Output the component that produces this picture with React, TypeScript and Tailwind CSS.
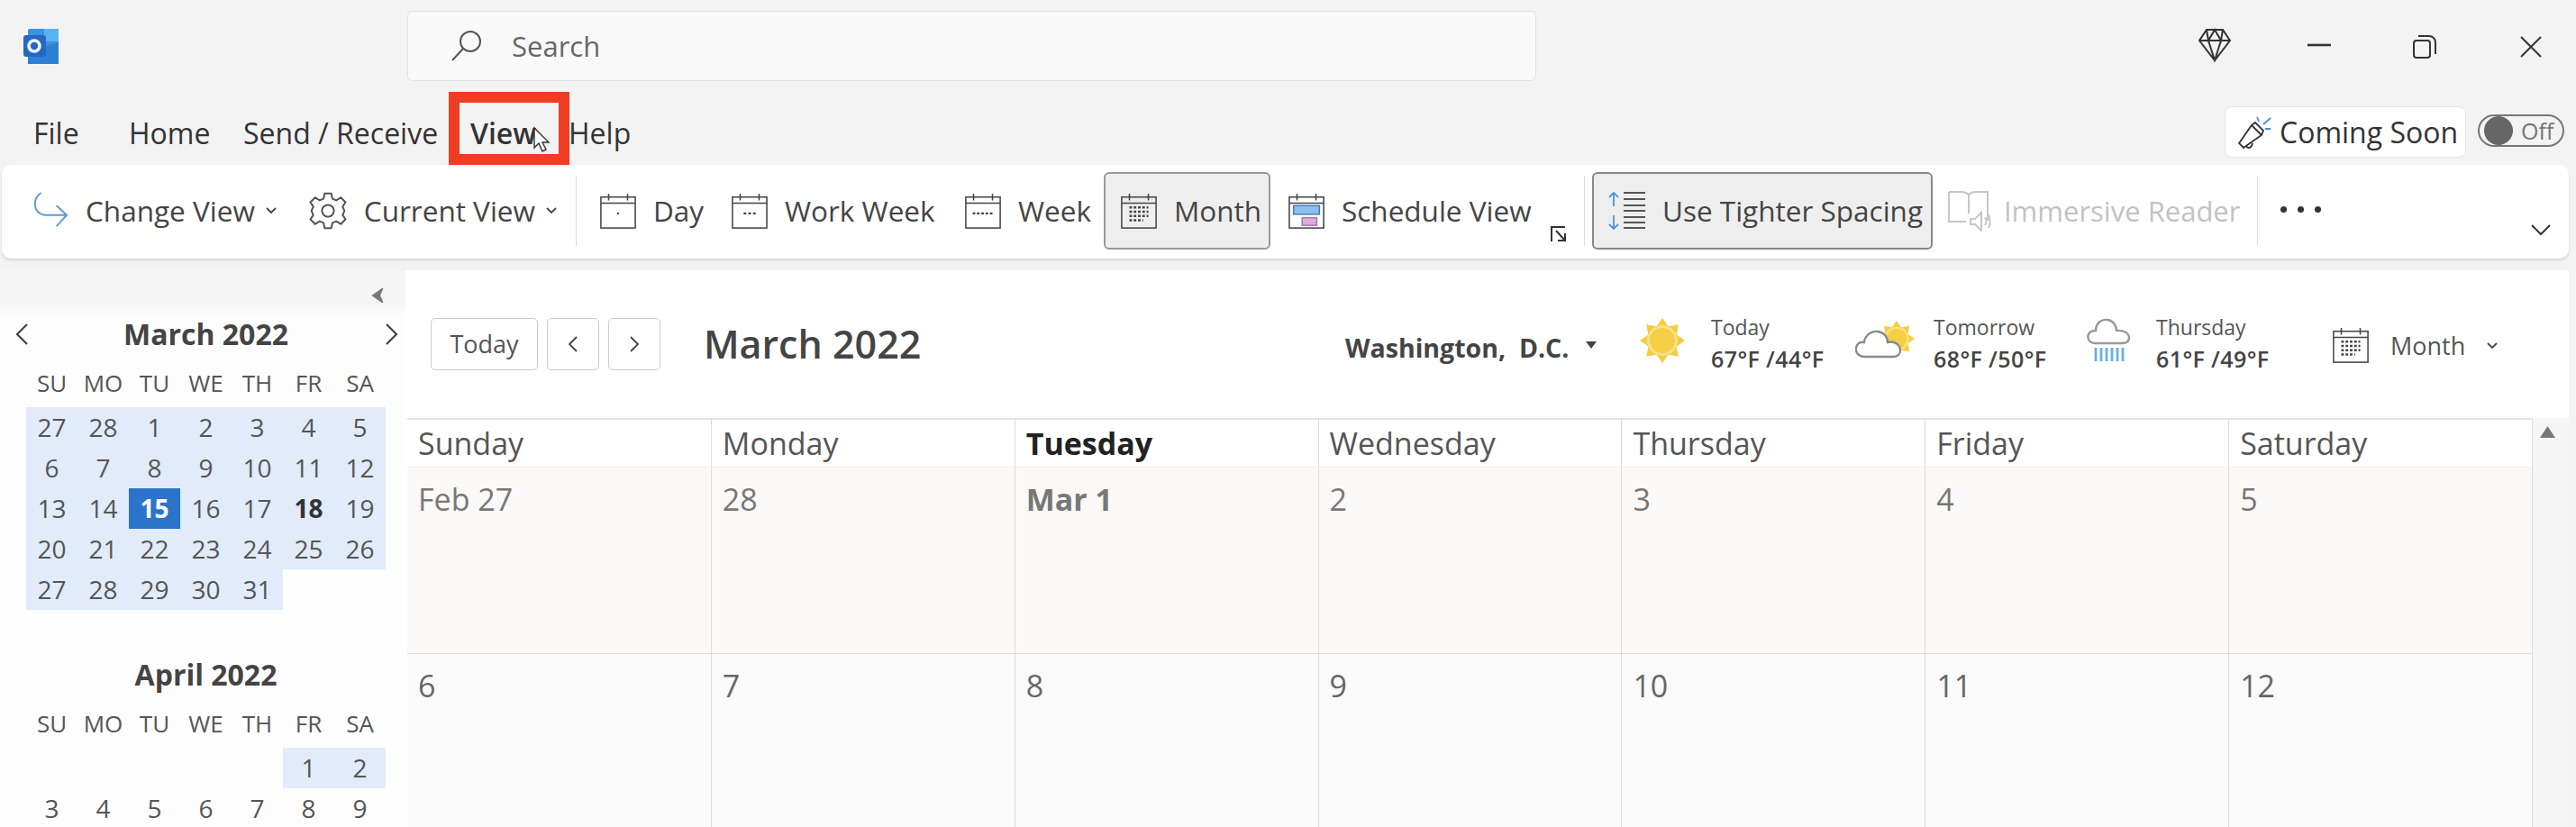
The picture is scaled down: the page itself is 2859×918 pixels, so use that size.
const font = 'font-["Open_Sans",_"Noto_Sans",sans-serif]'

const CalIcon = ({ kind }: { kind: 'day' | 'workweek' | 'week' | 'month' | 'schedule' }) => (
  <svg width="42" height="42" viewBox="0 0 44 44" className="shrink-0" fill="none" stroke="#444" strokeWidth="1.6">
    <rect x="2" y="6" width="40" height="36" />
    <path d="M2 13h40M11 2v8M33 2v8" />
    {kind === 'day' && <path d="M21 25h2" strokeWidth="2.5" />}
    {kind === 'workweek' && <path d="M15 25h14" strokeWidth="2.5" strokeDasharray="3 2.5" />}
    {kind === 'week' && <path d="M10 25h24" strokeWidth="2.5" strokeDasharray="3 2" />}
    {kind === 'month' && (
      <path d="M11 18h22M11 23h22M11 28h22M11 33h16" strokeWidth="2.6" strokeDasharray="3 2" />
    )}
    {kind === 'schedule' && (
      <>
        <rect x="7" y="16" width="30" height="10" fill="#8dc1ec" stroke="#3f7fc0" />
        <rect x="17" y="30" width="17" height="9" fill="#dcaee0" stroke="#a07aa8" />
      </>
    )}
  </svg>
)

const Chevron = ({ className = '' }: { className?: string }) => (
  <svg width="14" height="10" viewBox="0 0 14 10" fill="none" stroke="#444" strokeWidth="1.8" className={className}>
    <path d="M2 2l5 5 5-5" />
  </svg>
)

const RibbonCal = ({ kind, label, className }: { kind: 'day' | 'workweek' | 'week' | 'schedule'; label: string; className: string }) => (
  <div className={`flex items-center shrink-0 gap-[18px] ${className}`}>
    <CalIcon kind={kind} />
    <span>{label}</span>
  </div>
)

const rays = [0, 45, 90, 135, 180, 225, 270, 315]

// 8 pointed weather sun, centre at 25,25
const SunShape = ({ r = 25 }: { r?: number }) => (
  <g>
    {rays.map(a => (
      <path key={a} d={`M18 ${25 - r + 10}L25 ${25 - r}L32 ${25 - r + 10}z`} fill="#f4cd3c" transform={`rotate(${a} 25 25)`} />
    ))}
    <circle cx="25" cy="25" r={r - 8} fill="#f8e08a" />
    <circle cx="25" cy="25" r={r - 11} fill="#f4cf46" />
  </g>
)

const Weather = ({ label, temps, className }: { label: string; temps: string; className: string }) => (
  <div className={`flex flex-col ${className}`}>
    <span className="text-[23px] leading-[35px] text-[#555]">{label}</span>
    <span className="text-[25px] leading-[35px] font-semibold tracking-[0.4px] text-[#444] whitespace-nowrap">{temps}</span>
  </div>
)

const week = ['SU', 'MO', 'TU', 'WE', 'TH', 'FR', 'SA']

const MiniMonth = ({ title, days }: { title: string; days: (number | string)[] }) => (
  <div>
    <div className="text-center w-[399px] text-[32px] leading-[40px] font-bold text-[#444]">{title}</div>
    <div className="grid grid-cols-7 w-[399px] mt-[17px] text-center text-[26px] leading-[34px] text-[#555]">
      {week.map(d => (
        <div key={d}>{d}</div>
      ))}
    </div>
    <div className="grid grid-cols-7 w-[399px] mt-[10px] text-center text-[28px] text-[#555]">
      {days.map((d, i) => {
        const n = Number(d)
        const lit = title === 'March 2022' ? i < 33 : i === 5 || i === 6
        const today = title === 'March 2022' && n === 15
        const bold = title === 'March 2022' && n === 18
        return (
          <div
            key={i}
            className={`h-[45px] leading-[45px] ${
              today ? 'bg-[#2b74c9] text-white font-bold' : lit ? 'bg-[#e1ebf9]' : ''
            } ${bold ? 'font-bold text-[#333]' : ''}`}
          >
            {d}
          </div>
        )
      })}
    </div>
  </div>
)

const march = [27, 28, 1, 2, 3, 4, 5, 6, 7, 8, 9, 10, 11, 12, 13, 14, 15, 16, 17, 18, 19, 20, 21, 22, 23, 24, 25, 26, 27, 28, 29, 30, 31]
const april = ['', '', '', '', '', 1, 2, 3, 4, 5, 6, 7, 8, 9]

const headers = ['Sunday', 'Monday', 'Tuesday', 'Wednesday', 'Thursday', 'Friday', 'Saturday']
const row1 = ['Feb 27', '28', 'Mar 1', '2', '3', '4', '5']
const row2 = ['6', '7', '8', '9', '10', '11', '12']

export default function App() {
  return (
    <div className={`${font} w-[2859px] h-[918px] overflow-hidden bg-[#f3f3f3] text-[#333]`}>
      {/* title bar */}
      <div className="flex h-[102px] items-start">
        <svg width="40" height="40" viewBox="0 0 40 40" className="ml-[25px] mt-[32px] shrink-0">
          <rect x="6" y="0" width="34" height="39" rx="2" fill="#3b93e0" />
          <rect x="24" y="0" width="16" height="14" fill="#58b4ee" />
          <path d="M6 24l34-9v24H6z" fill="#2f80d4" />
          <rect x="1" y="7" width="25" height="24" rx="3" fill="#2468c4" />
          <circle cx="13" cy="19" r="6" fill="none" stroke="#f0f6fc" strokeWidth="3.6" />
        </svg>
        <div className="ml-[387px] mt-[12px] w-[1253px] h-[78px] bg-[#f9f9f9] border border-[#e2e2e2] rounded-[6px] flex items-center">
          <svg width="36" height="36" viewBox="0 0 36 36" fill="none" stroke="#555" strokeWidth="2" className="ml-[47px]">
            <circle cx="22" cy="13" r="11" />
            <path d="M14 21L2 34" />
          </svg>
          <span className="ml-[32px] text-[31px] text-[#666]">Search</span>
        </div>
        <svg width="38" height="38" viewBox="0 0 38 38" fill="none" stroke="#333" strokeWidth="2" className="ml-[734px] mt-[31px] shrink-0">
          <path d="M10 2h18l8 12-17 22L2 14zM2 14h34M12 14l7 22 7-22M10 2l2 12 7-12 7 12 2-12" />
        </svg>
        <svg width="26" height="4" viewBox="0 0 26 4" className="ml-[84px] mt-[48px] shrink-0">
          <path d="M0 2h26" stroke="#333" strokeWidth="2.6" />
        </svg>
        <svg width="26" height="26" viewBox="0 0 26 26" fill="none" stroke="#333" strokeWidth="2" className="ml-[91px] mt-[39px] shrink-0">
          <rect x="1" y="6" width="18" height="19" rx="3" />
          <path d="M6 1h12a7 7 0 0 1 7 7v13" />
        </svg>
        <svg width="24" height="24" viewBox="0 0 24 24" fill="none" stroke="#333" strokeWidth="2" className="ml-[93px] mt-[40px] shrink-0">
          <path d="M1 1l22 22M23 1L1 23" />
        </svg>
      </div>

      {/* menu row */}
      <div className="flex h-[81px] items-start relative text-[32px] leading-[42px]">
        <span className="absolute left-[37px] top-[25px]">File</span>
        <span className="absolute left-[143px] top-[25px]">Home</span>
        <span className="absolute left-[270px] top-[25px]">Send / Receive</span>
        <span className="absolute left-[522px] top-[25px] font-semibold">View</span>
        <span className="absolute left-[631px] top-[25px]">Help</span>
        <div className="absolute left-[498px] top-0 w-[134px] h-[81px] border-[12px] border-[#ee3d22]" />
        <svg width="20" height="30" viewBox="0 0 20 30" className="absolute left-[591px] top-[38px]" fill="#fff" stroke="#333" strokeWidth="1.4">
          <path d="M2 2v22l5-5 4 9 4-2-4-8h7z" />
        </svg>
        <div className="absolute left-[2469px] top-[16px] h-[57px] w-[268px] bg-white border border-[#e6e6e6] rounded-[8px] flex items-center">
          <svg width="38" height="38" viewBox="0 0 38 38" fill="none" strokeWidth="1.8" className="ml-[13px] shrink-0">
            <path d="M2 31L16 11l11 11-20 14zM10 34c1 3 6 3 7-3M16 11l4-3 9 9-2 5" stroke="#333" />
            <path d="M24 7l-2-5M29 10l8-7M31 15h6" stroke="#3d8fdc" />
          </svg>
          <span className="ml-[9px] whitespace-nowrap">Coming Soon</span>
        </div>
        <div className="absolute left-[2750px] top-[25px] w-[96px] h-[36px] rounded-full border-2 border-[#777] flex items-center">
          <div className="ml-[5px] w-[32px] h-[32px] rounded-full bg-[#666]" />
          <span className="ml-[9px] text-[25px] leading-none text-[#777]">Off</span>
        </div>
      </div>

      {/* ribbon */}
      <div className="ml-[2px] w-[2849px] h-[104px] pb-[2px] bg-white rounded-[10px] shadow-[0_2px_3px_rgba(0,0,0,0.12)] flex items-center text-[31.5px] text-[#444] whitespace-nowrap relative">
        <svg width="40" height="44" viewBox="0 0 42 44" fill="none" stroke="#5b9bd8" strokeWidth="2" className="ml-[34px] shrink-0">
          <path d="M10 1C0 8 0 24 14 27h26M28 16l12 11-12 13" />
        </svg>
        <span className="ml-[19px]">Change View</span>
        <Chevron className="ml-[11px] shrink-0" />
        <svg width="44" height="44" viewBox="0 0 24 24" fill="none" stroke="#555" strokeWidth="1.1" className="ml-[34px] shrink-0">
          <circle cx="12" cy="12" r="3.6" />
          <path d="M10 1.500h4l.7 3.200 2.300 1 2.800-1.700 2.800 2.800-1.700 2.700 1 2.300v.4l-1 2.300 1.700 2.700-2.800 2.800-2.800-1.700-2.300 1-.7 3.200h-4l-.7-3.200-2.300-1-2.800 1.700-2.800-2.800 1.700-2.700-1-2.300v-.4l1-2.300-1.700-2.700 2.800-2.800 2.800 1.700 2.300-1z" />
        </svg>
        <span className="ml-[18px]">Current View</span>
        <Chevron className="ml-[11px] shrink-0" />
        <div className="ml-[20px] w-px h-[78px] bg-[#ddd] shrink-0" />
        <RibbonCal kind="day" label="Day" className="ml-[25px] w-[146px]" />
        <RibbonCal kind="workweek" label="Work Week" className="w-[259px]" />
        <RibbonCal kind="week" label="Week" className="w-[155px]" />
        <div className="w-[185px] h-[86px] shrink-0 bg-[#eeeeee] border-2 border-[#999] rounded-[6px] flex items-center gap-[18px] pl-[16px]">
          <CalIcon kind="month" />
          <span>Month</span>
        </div>
        <RibbonCal kind="schedule" label="Schedule View" className="ml-[19px] w-[292px]" />
        <svg width="18" height="20" viewBox="0 0 18 20" fill="none" stroke="#333" strokeWidth="2" className="mt-[52px] shrink-0">
          <path d="M1 18V2h15M6 6l10 11M16 9v8H8" />
        </svg>
        <div className="ml-[19px] w-px h-[78px] bg-[#ddd] shrink-0" />
        <div className="ml-[8px] w-[378px] h-[86px] shrink-0 bg-[#eeeeee] border-2 border-[#888] rounded-[6px] flex items-center pl-[15px] gap-[17px]">
          <svg width="44" height="44" viewBox="0 0 44 44" fill="none" strokeWidth="1.8" className="shrink-0">
            <path d="M7 2v15M2 7l5-5 5 5M7 27v15M2 37l5 5 5-5" stroke="#4d94d6" />
            <path d="M18 2h24M18 9h24M18 16h24M18 22h24M18 29h24M18 35h24M18 41h24" stroke="#555" />
          </svg>
          <span>Use Tighter Spacing</span>
        </div>
        <div className="ml-[17px] w-[343px] shrink-0 flex items-center">
          <svg width="48" height="46" viewBox="0 0 48 46" fill="none" stroke="#c6c6c6" strokeWidth="2" className="shrink-0">
            <path d="M1 2h14c4 0 6 1 8 3 2-2 4-3 8-3h13v32M1 2v33h19M23 5v21" />
            <path d="M25 32h5l7-7v20l-7-7h-5zM41 30c2 3 2 6 0 9M45 27c2 5 2 11 0 15" />
          </svg>
          <span className="ml-[14px] text-[31px] text-[#c2c2c2]">Immersive Reader</span>
        </div>
        <div className="w-px h-[78px] bg-[#ddd] shrink-0" />
        <div className="ml-[25px] mb-[4px] flex gap-[12px]">
          <div className="w-[7px] h-[7px] rounded-full bg-[#333]" />
          <div className="w-[7px] h-[7px] rounded-full bg-[#333]" />
          <div className="w-[7px] h-[7px] rounded-full bg-[#333]" />
        </div>
        <svg width="24" height="14" viewBox="0 0 24 14" fill="none" stroke="#333" strokeWidth="2" className="absolute left-[2806px] top-[65px]">
          <path d="M2 2l10 10L22 2" />
        </svg>
      </div>

      {/* body */}
      <div className="flex h-[631px] mt-[13px]">
        <aside className="w-[450px] shrink-0 bg-[#fdfdfd] relative">
          <div className="h-[51px] bg-gradient-to-b from-[#f5f5f5] from-70% to-[#fdfdfd]" />
          <svg width="14" height="16" viewBox="0 0 14 16" fill="#777" className="absolute left-[412px] top-[20px]">
            <path d="M12 1L2 8l10 7-3-7z" stroke="#777" strokeWidth="2" />
          </svg>
          <svg width="16" height="26" viewBox="0 0 16 26" fill="none" stroke="#444" strokeWidth="2.2" className="absolute left-[16px] top-[58px]">
            <path d="M14 2L3 13l11 11" />
          </svg>
          <svg width="16" height="26" viewBox="0 0 16 26" fill="none" stroke="#444" strokeWidth="2.2" className="absolute left-[427px] top-[58px]">
            <path d="M2 2l11 11L2 24" />
          </svg>
          <div className="pl-[29px]">
            <MiniMonth title="March 2022" days={march} />
            <div className="mt-[52px]">
              <MiniMonth title="April 2022" days={april} />
            </div>
          </div>
        </aside>

        <main className="w-[2401px] shrink-0 bg-white">
          <div className="h-[164px] flex items-start whitespace-nowrap relative">
            <div className="ml-[28px] mt-[53px] w-[119px] h-[58px] border border-[#ccc] rounded-[5px] flex items-center justify-center text-[27px] text-[#555]">Today</div>
            <div className="ml-[10px] mt-[53px] w-[58px] h-[58px] border border-[#ccc] rounded-[5px] flex items-center justify-center">
              <svg width="12" height="20" viewBox="0 0 12 20" fill="none" stroke="#444" strokeWidth="1.8"><path d="M10 2L2 10l8 8" /></svg>
            </div>
            <div className="ml-[10px] mt-[53px] w-[58px] h-[58px] border border-[#ccc] rounded-[5px] flex items-center justify-center">
              <svg width="12" height="20" viewBox="0 0 12 20" fill="none" stroke="#444" strokeWidth="1.8"><path d="M2 2l8 8-8 8" /></svg>
            </div>
            <div className="ml-[48px] mt-[57px] text-[43px] leading-[50px] font-semibold text-[#444]">March 2022</div>
            <div className="absolute left-[1043px] top-[68px] text-[28.5px] leading-[36px] font-bold text-[#444]">Washington,&nbsp; D.C.</div>
            <svg width="12" height="8" viewBox="0 0 12 8" fill="#444" className="absolute left-[1310px] top-[79px]"><path d="M0 0h12L6 8z" /></svg>
            <svg width="50" height="50" viewBox="0 0 50 50" className="absolute left-[1370px] top-[53px]">
              <SunShape />
            </svg>
            <Weather label="Today" temps="67°F /44°F" className="absolute left-[1449px] top-[46px]" />
            <svg width="66" height="44" viewBox="0 0 66 44" fill="none" className="absolute left-[1609px] top-[56px]">
              <g transform="translate(26 0) scale(0.8)">
                <SunShape />
              </g>
              <path d="M11 40C3 40 0 34 1 30c1-5 5-7 9-6 1-8 8-13 15-12 7 1 11 6 11 12 8-2 14 3 14 9 0 4-3 7-8 7z" fill="#fff" stroke="#8a8a8a" strokeWidth="2.4" />
            </svg>
            <Weather label="Tomorrow" temps="68°F /50°F" className="absolute left-[1696px] top-[46px]" />
            <svg width="50" height="50" viewBox="0 0 50 50" fill="none" className="absolute left-[1866px] top-[53px]">
              <path d="M10 28C3 28 0 23 2 18c2-4 5-4 8-4 0-9 7-13 13-12 7 1 10 7 10 12 8-1 14 3 14 8 0 4-3 6-8 6z" stroke="#999" strokeWidth="2.4" />
              <path d="M10 33v15M16 33v15M22 33v15M28 33v15M34 33v15M40 33v15" stroke="#6aaee6" strokeWidth="2.8" />
            </svg>
            <Weather label="Thursday" temps="61°F /49°F" className="absolute left-[1943px] top-[46px]" />
            <div className="absolute left-[2138px] top-[62px]"><CalIcon kind="month" /></div>
            <span className="absolute left-[2203px] top-[66px] text-[27px] leading-[36px] text-[#555]">Month</span>
            <Chevron className="absolute left-[2309px] top-[79px]" />
          </div>

          <div className="flex pl-[2px]">
            <div className="w-[2359px] border-r border-[#dcdcdc]">
              <div className="grid grid-cols-7 h-[55px] border-t-2 border-[#e4e4e4] border-b border-b-[#f0f0f0] bg-white text-[34px] leading-[52px] text-[#555]">
                {headers.map((h, i) => (
                  <div key={h} className={`pl-[12px] ${i ? 'border-l border-[#dcdcdc]' : ''} ${h === 'Tuesday' ? 'font-bold text-[#222]' : ''}`}>{h}</div>
                ))}
              </div>
              <div className="grid grid-cols-7 h-[206px] bg-[#faf9f8] text-[34px] leading-[42px] text-[#777]">
                {row1.map((d, i) => (
                  <div key={d} className={`pl-[12px] pt-[14px] ${i ? 'border-l border-[#dcdcdc]' : ''} ${d === 'Mar 1' ? 'font-bold' : ''}`}>{d}</div>
                ))}
              </div>
              <div className="grid grid-cols-7 h-[200px] bg-[#fbfafa] border-t border-[#dcdcdc] text-[34px] leading-[42px] text-[#666]">
                {row2.map((d, i) => (
                  <div key={d} className={`pl-[12px] pt-[14px] ${i ? 'border-l border-[#dcdcdc]' : ''}`}>{d}</div>
                ))}
              </div>
            </div>
            <div className="w-[40px] bg-[#f5f5f5]">
              <svg width="17" height="13" viewBox="0 0 17 13" fill="#777" className="ml-[8px] mt-[9px]"><path d="M8.500 0l8.500 13H0z" /></svg>
            </div>
          </div>
        </main>
      </div>
    </div>
  )
}
